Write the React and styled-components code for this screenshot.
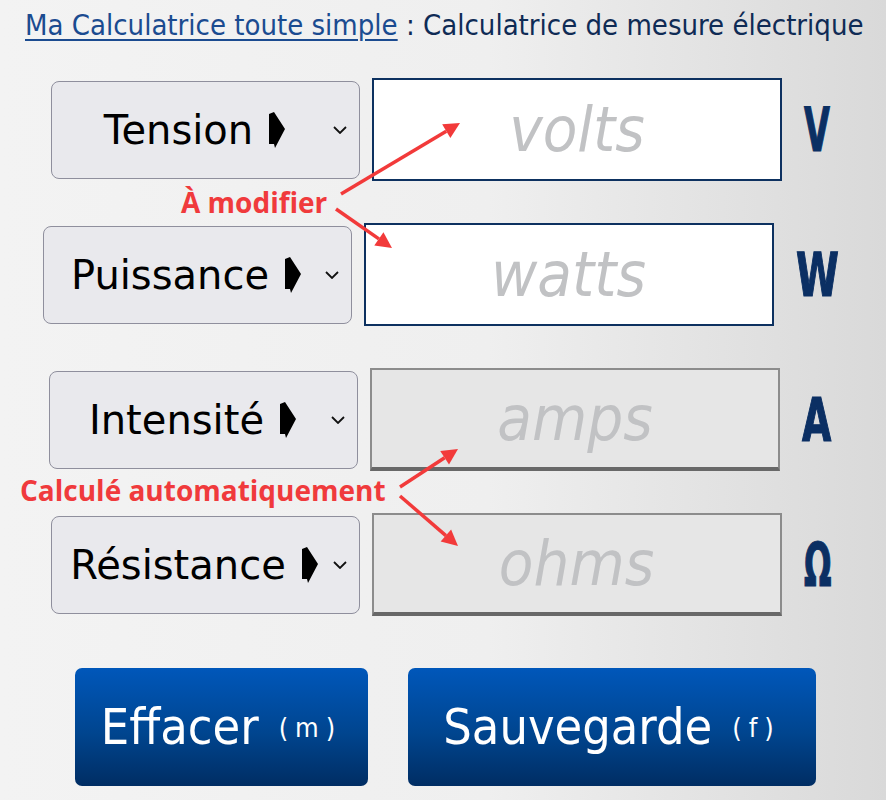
import React from 'react';
import styled, { createGlobalStyle, css } from 'styled-components';

const GlobalStyle = createGlobalStyle`
  html, body {
    margin: 0;
    padding: 0;
  }
  body {
    background: linear-gradient(90deg, #f3f3f3 0%, #efefef 55%, #d9d9d9 100%);
    min-height: 800px;
  }
`;

const Page = styled.div`
  position: relative;
  width: 886px;
  height: 800px;
  overflow: hidden;
`;

const Title = styled.h1`
  margin: 0;
  padding: 7px 0 0 25px;
  font-family: 'DejaVu Sans Condensed', 'DejaVu Sans', sans-serif;
  font-weight: normal;
  font-size: 29px;
  line-height: 36px;
  color: #0f2b55;
  white-space: nowrap;
`;

const TitleLink = styled.a`
  color: #1b4b90;
  text-decoration: underline;
  text-underline-offset: 4px;
  text-decoration-thickness: 2px;
`;

const Form = styled.div`
  display: flex;
  flex-direction: column;
  align-items: center;
  gap: 42px;
  margin-top: 35px;
  padding-right: 5px;
`;

const Row = styled.div`
  display: flex;
  align-items: center;
  height: 103px;
`;

// fake select box: label centered, chevron on the right
const Select = styled.div`
  box-sizing: border-box;
  width: 309px;
  height: 98px;
  display: flex;
  align-items: center;
  padding-left: 8px;
  border: 1.5px solid #8f8f9d;
  border-radius: 8px;
  background: #e9e9ed;
  font-family: 'DejaVu Sans', Verdana, sans-serif;
  font-size: 40px;
  color: #000;
`;

const SelectLabel = styled.span`
  flex: 1;
  display: flex;
  align-items: center;
  justify-content: center;
  gap: 16px;
  white-space: nowrap;
`;

const Chevron = styled.svg`
  width: 14px;
  height: 8px;
  margin: 0 12px 0 4px;
  flex: none;
`;

const Marker = styled.svg`
  width: 16px;
  height: 36px;
  flex: none;
`;

const ValueInput = styled.input`
  box-sizing: border-box;
  width: 410px;
  height: 103px;
  margin-left: 12px;
  border: 2px solid #0d3160;
  background: #fff;
  outline: none;
  font-family: 'DejaVu Sans Condensed', 'DejaVu Sans', sans-serif;
  font-style: italic;
  font-size: 63px;
  text-align: center;
  color: #222;
  &::placeholder {
    color: #c1c2c4;
  }
  ${({ $auto }) =>
    $auto &&
    css`
      background: #e6e6e6;
      border-color: #8c8c8c;
      border-bottom: 4px solid #686868;
    `}
`;

const Unit = styled.span`
  display: block;
  width: ${({ $w }) => $w}px;
  margin-left: 22px;
  font-family: 'DejaVu Sans Condensed', 'DejaVu Sans', sans-serif;
  font-weight: bold;
  font-size: 60px;
  line-height: 1;
  color: #0b2f63;
  -webkit-text-stroke: 1.2px #0b2f63;
`;

const UnitGlyph = styled.span`
  display: inline-block;
  transform: scaleX(${({ $sx }) => $sx});
  transform-origin: left center;
`;

const Buttons = styled.div`
  display: flex;
  justify-content: center;
  gap: 40px;
  margin-top: 52px;
  padding-left: 5px;
`;

const Button = styled.button`
  box-sizing: border-box;
  width: ${({ $w }) => $w}px;
  height: 118px;
  border: none;
  border-radius: 7px;
  background: linear-gradient(180deg, #0057ba 0%, #00458f 55%, #002d63 100%);
  color: #fff;
  font-family: 'DejaVu Sans Condensed', 'DejaVu Sans', sans-serif;
  font-size: 50px;
  display: flex;
  align-items: center;
  justify-content: center;
  cursor: pointer;
`;

const Shortcut = styled.span`
  font-size: 27px;
  letter-spacing: 7px;
  margin-left: 20px;
`;

const Note = styled.span`
  position: absolute;
  left: ${({ $x }) => $x}px;
  top: ${({ $y }) => $y}px;
  font-family: 'Open Sans', 'Noto Sans', sans-serif;
  font-weight: bold;
  font-size: 28px;
  line-height: 30px;
  color: #f03a3c;
  white-space: nowrap;
`;

const Arrows = styled.svg`
  position: absolute;
  left: 0;
  top: 0;
  pointer-events: none;
`;

const fields = [
  { label: 'Tension', ph: 'volts', unit: 'V', w: 26, sx: 0.62 },
  { label: 'Puissance', ph: 'watts', unit: 'W', w: 43, sx: 0.72 },
  { label: 'Intensité', ph: 'amps', unit: 'A', w: 30, sx: 0.7, auto: true },
  { label: 'Résistance', ph: 'ohms', unit: 'Ω', w: 27, sx: 0.6, auto: true },
];

const arrows = [
  [341, 194, 460, 123],
  [336, 209, 392, 248],
  [400, 487, 458, 449],
  [400, 496, 458, 546],
];

const Arrow = ({ x1, y1, x2, y2 }) => {
  const a = Math.atan2(y2 - y1, x2 - x1);
  const len = 16;
  const w = 8;
  const bx = x2 - len * Math.cos(a);
  const by = y2 - len * Math.sin(a);
  const px = -Math.sin(a) * w;
  const py = Math.cos(a) * w;
  return (
    <g>
      <line x1={x1} y1={y1} x2={bx} y2={by} stroke="#f23a3a" strokeWidth="3.5" />
      <polygon points={`${x2},${y2} ${bx + px},${by + py} ${bx - px},${by - py}`} fill="#f23a3a" />
    </g>
  );
};

export default function App() {
  return (
    <Page>
      <GlobalStyle />
      <Title>
        <TitleLink href="#">Ma Calculatrice toute simple</TitleLink> : Calculatrice de mesure électrique
      </Title>

      <Form>
        {fields.map((f) => (
          <Row key={f.unit}>
            <Select>
              <SelectLabel>
                {f.label}
                <Marker viewBox="0 0 16 36">
                  <polygon points="0,2 5,0 16,17 6,36 5,32 0,32" fill="#000" />
                </Marker>
              </SelectLabel>
              <Chevron viewBox="0 0 14 8">
                <polyline points="1,1 7,7 13,1" fill="none" stroke="#111" strokeWidth="1.8" />
              </Chevron>
            </Select>
            <ValueInput placeholder={f.ph} $auto={f.auto} readOnly={f.auto} />
            <Unit $w={f.w}>
              <UnitGlyph $sx={f.sx}>{f.unit}</UnitGlyph>
            </Unit>
          </Row>
        ))}
      </Form>

      <Buttons>
        <Button $w={293}>
          Effacer<Shortcut>(m)</Shortcut>
        </Button>
        <Button $w={408}>
          Sauvegarde<Shortcut>(f)</Shortcut>
        </Button>
      </Buttons>

      <Note $x={181} $y={187}>À modifier</Note>
      <Note $x={20} $y={475}>Calculé automatiquement</Note>
      <Arrows width="886" height="800">
        {arrows.map(([x1, y1, x2, y2], i) => (
          <Arrow key={i} x1={x1} y1={y1} x2={x2} y2={y2} />
        ))}
      </Arrows>
    </Page>
  );
}
